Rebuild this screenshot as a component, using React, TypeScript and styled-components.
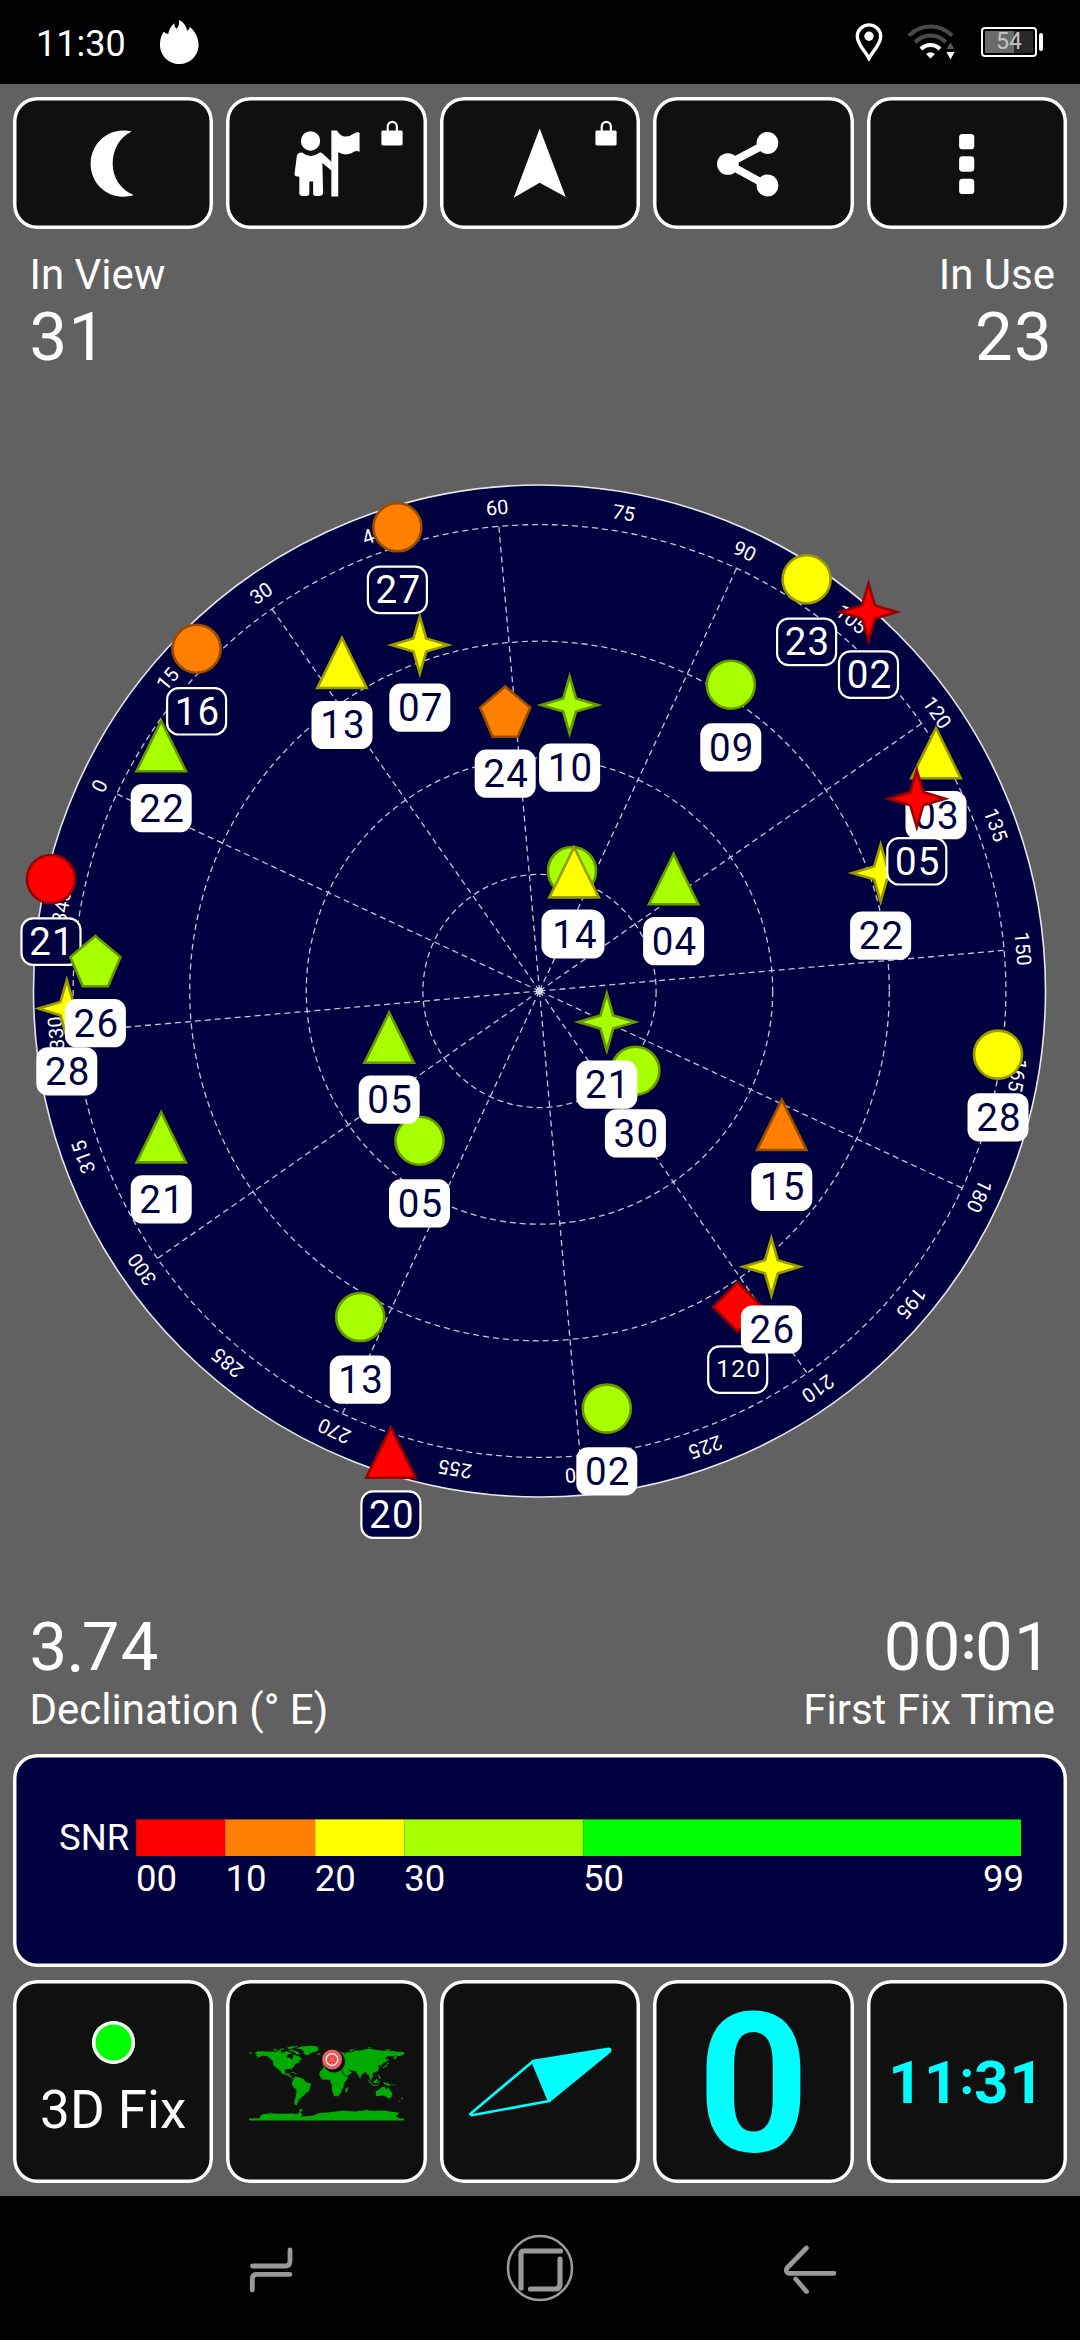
import React from "react";
import styled, { createGlobalStyle } from "styled-components";

const NAVY = "#000040";
const CYAN = "#00ffff";
const GREEN = "#a8ff00";
const YELLOW = "#ffff00";
const ORANGE = "#ff8000";
const RED = "#ff0000";

const OUTLINES: Record<string, string> = {
  [GREEN]: "#659900",
  [YELLOW]: "#999900",
  [ORANGE]: "#994d00",
  [RED]: "#990000",
};

const GlobalStyle = createGlobalStyle`
  body {
    margin: 0;
    background: #000;
    color: #fff;
    font-family: Roboto, "Liberation Sans", sans-serif;
  }
  * { box-sizing: border-box; }
`;

const Screen = styled.div`
  width: 1080px;
  height: 2340px;
  display: flex;
  flex-direction: column;
  overflow: hidden;
`;

const StatusBar = styled.header`
  height: 84px;
  background: #000;
  display: flex;
  align-items: center;
  padding: 0 37px 0 36px;
`;

const Clock = styled.span`
  font-size: 36px;
  line-height: 42px;
  width: 124px;
  padding-top: 4px;
`;

const StatusIcons = styled.div`
  margin-left: auto;
  display: flex;
  align-items: center;
`;

const WifiIcon = styled.svg`
  width: 48px;
  height: 36px;
  margin-left: 24px;
  fill: none;
  stroke-width: 4;
`;

const Battery = styled.div`
  width: 56px;
  height: 30px;
  margin-left: 26px;
  border: 2px solid #fff;
  border-radius: 4px;
  padding: 2px;
`;

const BatteryLevel = styled.div<{ $level: number }>`
  height: 100%;
  display: flex;
  align-items: center;
  justify-content: center;
  font-size: 23px;
  line-height: 22px;
  color: #c4c4c4;
  background: linear-gradient(
    to right,
    #6b6b6b ${(p) => p.$level + 6}%,
    #2b282b ${(p) => p.$level + 6}%
  );
`;

const BatteryTip = styled.div`
  width: 4px;
  height: 18px;
  margin-left: 2px;
  border-radius: 2px;
  background: #fff;
`;

const Body = styled.main`
  flex: 1;
  background: #616161;
  display: flex;
  flex-direction: column;
  padding-top: 13px;
`;

const ButtonRow = styled.div<{ $height: number }>`
  height: ${(p) => p.$height}px;
  margin: 0 13px;
  display: grid;
  grid-template-columns: repeat(5, 1fr);
  gap: 13px;
`;

const Tile = styled.button`
  position: relative;
  display: flex;
  flex-direction: column;
  align-items: center;
  min-width: 0;
  min-height: 0;
  padding: 3.5px;
  font: inherit;
  color: #fff;
  background: #101010;
  border: 0;
  box-shadow: inset 0 0 0 3.5px #fff;
  border-radius: 24px;
`;

const TileArt = styled.svg`
  display: block;
  width: 100%;
  height: 100%;
`;

const LockBadge = styled.svg`
  position: absolute;
  top: 22.5px;
  right: 23.5px;
  width: 22px;
  height: 26px;
`;

const Stats = styled.section<{ $top: number; $bottom: number }>`
  display: flex;
  justify-content: space-between;
  padding: ${(p) => p.$top}px 25px ${(p) => p.$bottom}px 29.5px;
`;

const Stat = styled.div<{ $end?: boolean }>`
  display: flex;
  flex-direction: column;
  align-items: ${(p) => (p.$end ? "flex-end" : "flex-start")};
`;

const StatName = styled.span`
  font-size: 42px;
  line-height: 51px;
  white-space: pre;
`;

const StatValue = styled.span`
  font-size: 67px;
  line-height: 74px;
  letter-spacing: 1.3px;
  padding-right: 2px;
`;

const Dot = styled.span<{ $rise: number; $width: number }>`
  display: inline-flex;
  justify-content: center;
  width: ${(p) => p.$width}px;
  font-family: Lato, Roboto, sans-serif;
  font-weight: 900;
  font-size: 50px;
  line-height: 50px;
  letter-spacing: 0;
  transform: translateY(${(p) => -p.$rise}px);
`;

const Sky = styled.svg`
  display: block;
  width: 1080px;
  height: 1236px;
  font-family: Roboto, "Liberation Sans", sans-serif;
`;

const SnrPanel = styled.section`
  height: 213px;
  margin: 0 13px 13px;
  padding: 65px 0 0 46px;
  display: flex;
  background: ${NAVY};
  box-shadow: inset 0 0 0 3.5px #fff;
  border-radius: 24px;
  font-size: 36.5px;
`;

const SnrTitle = styled.span`
  width: 77px;
  line-height: 37px;
`;

const SnrScale = styled.div`
  width: 885px;
  display: grid;
  grid-template-columns: 10fr 10fr 10fr 20fr 49fr;
`;

const SnrBand = styled.div`
  display: flex;
  flex-direction: column;
  min-width: 0;
`;

const SnrColor = styled.div<{ $color: string }>`
  height: 37px;
  background: ${(p) => p.$color};
  border-top: 1px solid rgba(0, 0, 40, 0.4);
  border-left: 1px solid rgba(0, 0, 40, 0.18);
`;

const SnrTicks = styled.div`
  display: flex;
  justify-content: space-between;
  margin: 3px -3px 0 0;
  line-height: 40px;
`;

const FixLight = styled.div`
  width: 43px;
  height: 43px;
  flex: none;
  margin-top: 37.5px;
  box-shadow: inset 0 0 0 3.5px #fff;
  border-radius: 50%;
  background: #00ff00;
`;

const FixText = styled.span`
  margin-top: 15px;
  font-size: 53px;
  line-height: 62px;
`;

const Heading = styled.span`
  font-size: 195px;
  line-height: 201px;
  font-weight: 700;
  color: ${CYAN};
`;

const LocalTime = styled.span`
  font-size: 60px;
  line-height: 198.5px;
  font-weight: 700;
  letter-spacing: 1.2px;
  color: ${CYAN};
`;

const NavBar = styled.nav`
  height: 144px;
  background: #000;
  display: flex;
  align-items: center;
  justify-content: center;
`;

const NavIcon = styled.svg`
  width: 270px;
  height: 144px;
  fill: none;
  stroke: #999;
  stroke-width: 4.8;
  stroke-linecap: round;
  stroke-linejoin: round;
`;

const Lock = () => (
  <LockBadge viewBox="0 0 22 26">
    <path d="M6.7 11V6.8a4.6 4.9 0 0 1 9.2 0V11" fill="none" stroke="#fff" strokeWidth="2.2" />
    <rect x="0.4" y="10.6" width="21.2" height="14.8" rx="1.4" fill="#fff" />
  </LockBadge>
);

type Shape = "circle" | "triangle" | "star" | "pentagon" | "diamond";

interface Satellite {
  id: string;
  x: number;
  y: number;
  shape: Shape;
  color: string;
  used: boolean;
}

const sat = (
  id: string,
  x: number,
  y: number,
  shape: Shape,
  color: string,
  used = true
): Satellite => ({ id, x, y, shape, color, used });

const satellites: Satellite[] = [
  sat("27", 397.4, 527.3, "circle", ORANGE, false),
  sat("16", 196.6, 648.7, "circle", ORANGE, false),
  sat("21", 51, 879, "circle", RED, false),
  sat("23", 806.6, 579.3, "circle", YELLOW, false),
  sat("", 572, 871, "circle", GREEN),
  sat("09", 730.8, 684.7, "circle", GREEN),
  sat("30", 635.4, 1070.7, "circle", GREEN),
  sat("05", 419.5, 1140.7, "circle", GREEN),
  sat("13", 360.2, 1317, "circle", GREEN),
  sat("28", 998, 1054.6, "circle", YELLOW),
  sat("02", 606.8, 1408.6, "circle", GREEN),
  sat("13", 342, 662.3, "triangle", YELLOW),
  sat("22", 161.2, 745.5, "triangle", GREEN),
  sat("03", 936, 752.5, "triangle", YELLOW),
  sat("14", 574.1, 871.7, "triangle", YELLOW),
  sat("04", 673.6, 878.5, "triangle", GREEN),
  sat("05", 389.2, 1037, "triangle", GREEN),
  sat("21", 161.2, 1136.7, "triangle", GREEN),
  sat("20", 390.9, 1452, "triangle", RED, false),
  sat("15", 781.8, 1124.3, "triangle", ORANGE),
  sat("120", 737.7, 1307, "diamond", RED, false),
  sat("07", 419.8, 645, "star", YELLOW),
  sat("28", 66.8, 1008.6, "star", YELLOW),
  sat("10", 569.6, 705, "star", GREEN),
  sat("02", 868.5, 612, "star", RED, false),
  sat("22", 880.6, 873, "star", YELLOW),
  sat("05", 916.8, 798.7, "star", RED, false),
  sat("21", 606.8, 1022, "star", GREEN),
  sat("26", 771.4, 1266.8, "star", YELLOW),
  sat("24", 505.2, 711, "pentagon", ORANGE),
  sat("26", 95.4, 960.5, "pentagon", GREEN),
];

const POINTS: Record<Exclude<Shape, "circle">, string> = {
  triangle: "0,-24.5 24.7,25.7 -24.7,25.7",
  star: "0,-28.7 6.4,-6.6 28.5,0 6.4,6.6 0,28.7 -6.4,6.6 -28.5,0 -6.4,-6.6",
  pentagon: "0,-24.5 25.1,-3.4 12.6,25.7 -12.6,25.7 -25.1,-3.4",
  diamond: "0,-24.6 24.6,0 0,24.6 -24.6,0",
};

const Marker = ({ s }: { s: Satellite }) => {
  const paint = { fill: s.color, stroke: OUTLINES[s.color], strokeWidth: 2.6 };
  const small = s.id.length > 2;
  return (
    <g transform={`translate(${s.x} ${s.y})`}>
      {s.shape === "circle" ? (
        <circle r="24" {...paint} />
      ) : (
        <polygon points={POINTS[s.shape]} strokeMiterlimit="10" {...paint} />
      )}
      <rect
        x={s.used ? -30.5 : -29.5}
        y={s.used ? 38.6 : 39.4}
        width={s.used ? 61 : 59}
        height={s.used ? 48.2 : 46.4}
        rx="11.5"
        fill={s.used ? "#fff" : NAVY}
        stroke="#fff"
        strokeWidth={s.used ? 0 : 2.2}
      />
      <text
        x="1"
        y={small ? 70.3 : 76}
        textAnchor="middle"
        fontSize={small ? 24.5 : 38.5}
        letterSpacing="1.2"
        fill={s.used ? NAVY : "#fff"}
      >
        {s.id}
      </text>
    </g>
  );
};

const CX = 539.5;
const CY = 991;
const RING = 116.6;
const ROTATION = -65;

const SkyPlot = () => (
  <Sky viewBox="0 374 1080 1236">
    <circle cx={CX} cy={CY} r="506" fill={NAVY} stroke="#e6e6ec" strokeWidth="1.6" />
    <g fill="none" stroke="#c4c4d2" strokeWidth="1.3" strokeDasharray="6 4">
      {[1, 2, 3, 4].map((n) => (
        <circle key={n} cx={CX} cy={CY} r={RING * n} />
      ))}
      {Array.from({ length: 12 }, (_, i) => (
        <line
          key={i}
          x1={CX}
          y1={CY}
          x2={CX}
          y2={CY - RING * 4}
          transform={`rotate(${ROTATION + i * 30} ${CX} ${CY})`}
        />
      ))}
    </g>
    <circle cx={CX} cy={CY} r="3.6" fill="#d8d8e4" />
    {Array.from({ length: 24 }, (_, i) => (
      <text
        key={i}
        x={CX}
        y={CY - 478.4}
        textAnchor="middle"
        fontSize="20"
        fill="#fff"
        transform={`rotate(${ROTATION + i * 15} ${CX} ${CY})`}
      >
        {i * 15}
      </text>
    ))}
    {satellites.map((s, i) => (
      <Marker key={i} s={s} />
    ))}
  </Sky>
);

/* Coastlines as longitude,latitude pairs. */
const LAND = [
  "-168,66 -162,70 -156,71 -141,70 -128,70 -115,69 -108,68 -98,68 -94,72 -88,68 -82,69 -81,66 -87,64 -94,60 -92,57 -85,55 -82,52 -79,52 -79,55 -77,58 -78,62 -73,62 -69,59 -65,60 -62,57 -57,52 -60,50 -66,50 -65,48 -61,46 -66,44 -70,43 -71,41 -75,39 -76,35 -81,31 -80,26 -82,28 -84,30 -90,29 -95,29 -97,26 -97,22 -95,18 -91,19 -88,21 -88,17 -84,15 -83,11 -80,9 -77,8 -80,7 -84,9 -87,13 -94,16 -100,17 -105,20 -106,23 -110,27 -113,31 -114,29 -110,24 -113,27 -117,33 -121,35 -124,40 -124,47 -128,51 -134,57 -140,60 -147,61 -152,59 -158,56 -165,54 -158,59 -165,61 -161,64",
  "-73,78 -66,79 -60,82 -35,83.5 -22,82 -18,76 -22,71 -32,68 -40,65 -43,61 -50,63 -54,67 -53,71 -60,76",
  "-90,73 -80,74 -70,71 -62,66 -65,63 -72,65 -74,69 -82,71",
  "-118,72 -108,73 -103,69 -114,69",
  "-125,74 -120,76 -115,74 -120,72",
  "-92,79 -85,82 -64,83 -76,79 -82,76 -90,77",
  "-110,76 -100,78 -98,75 -108,74",
  "-84,22 -78,23 -74,20 -69,19 -73,18 -77,20",
  "-180,69 -172,67 -170,66 -180,65",
  "-77,8 -72,12 -62,10 -52,5 -50,0 -44,-2 -35,-6 -39,-13 -40,-21 -48,-26 -53,-33 -58,-35 -57,-38 -62,-39 -65,-43 -66,-48 -69,-51 -67,-55 -74,-53 -75,-47 -73,-40 -71,-30 -70,-18 -76,-14 -81,-5 -80,0 -77,4",
  "-6,36 10,37 11,33 20,31 25,32 32,31 36,23 38,18 43,12 51,12 46,3 40,-4 40,-11 35,-20 35,-24 32,-28 27,-34 18,-34 15,-27 12,-18 13,-9 9,-1 9,4 -4,5 -8,4 -13,9 -17,15 -16,22 -10,29",
  "49,-12 50,-16 47,-25 44,-24 44,-17",
  "-9,37 -9,43 -1,44 -4,48 4,52 9,54 8,57 5,60 12,65 20,70 30,70 41,67 40,64 45,68 60,69 68,73 75,72 80,73 88,75 100,77 113,74 130,72 140,73 160,70 180,69 180,65 177,62 170,60 163,60 163,56 157,51 156,57 163,62 155,59 142,59 135,54 141,52 139,47 131,43 127,39 129,36 126,35 125,39 121,39 118,38 122,37 120,34 122,30 119,25 114,22 108,21 106,18 109,14 105,9 103,1 100,8 98,16 94,17 91,22 87,21 80,15 80,10 77,8 73,17 70,21 66,25 57,26 51,29 48,30 56,24 59,22 53,16 45,13 39,21 35,28 36,36 27,37 26,40 22,37 19,42 14,45 18,40 10,44 3,43 -1,37",
  "-24,65 -14,66 -15,63 -22,63",
  "53,71 56,75 68,77 60,73 57,70",
  "95,81 105,79 100,78",
  "138,76 150,75 143,73",
  "141,46 145,43 141,41 141,36 135,33 130,31 131,34 136,36 140,40",
  "143,54 144,50 142,46 141,51",
  "95,5 99,3 106,-4 105,-6 100,-2",
  "105,-6 115,-8 125,-9 115,-10 106,-8",
  "109,1 117,7 119,4 116,-4 110,-3",
  "119,1 125,2 121,-1 122,-5 119,-4",
  "120,18 123,14 126,8 124,6 122,10 120,14",
  "131,-1 141,-3 147,-6 151,-10 146,-9 140,-8 133,-4",
  "150,-4 160,-8 161,-10 151,-6",
  "114,-22 122,-18 126,-14 131,-12 136,-12 136,-16 141,-17 142,-11 146,-18 153,-26 150,-37 144,-39 138,-35 131,-32 124,-33 115,-34",
  "145,-41 148,-41 147,-43",
  "173,-35 178,-38 175,-41",
  "173,-41 167,-46 170,-46",
  "80,9 82,7 80,6",
];

const WorldMap = () => (
  <TileArt viewBox="-30.3 -139.5 580.2 588" preserveAspectRatio="none">
    <g fill="#00ab00">
      <g transform="translate(259.5 153.7) scale(1.2917 -1.2917)">
        {LAND.map((points) => (
          <polygon key={points} points={points} />
        ))}
      </g>
      <polygon points="27,264 60,263 60,256 66,255 65,251 90,248 120,250 160,249 172,251 180,243 176,238 188,235 186,241 180,247 188,251 180,258 190,258 220,255 235,248 262,246 285,243 310,241 345,243 370,240 380,238 390,241 430,240 450,243 474,246 478,249 470,253 468,259 480,264 492,264 492,270 27,270" />
    </g>
    <circle cx="282" cy="93" r="33" fill="#101010" />
    <circle cx="276" cy="87" r="30" fill="#ea6060" />
    <circle cx="275.5" cy="87" r="17.5" fill="#f05a5a" stroke="#fff" strokeWidth="3.6" />
    <circle cx="275.5" cy="87" r="10" fill="none" stroke="#e00000" strokeWidth="3" strokeDasharray="3 6" />
  </TileArt>
);

const App = () => (
  <Screen>
    <GlobalStyle />
    <StatusBar>
      <Clock>11:30</Clock>
      <svg width="38.6" height="44" viewBox="464 60 112 132" preserveAspectRatio="none" fill="#fff">
        <path d="M464 135C464 115 470 102 475 95Q480 101 488 102C490 90 497 76 506 70C505 78 508 84 512 86C519 80 521 68 519 60C532 65 540 78 543 92C548 90 550 85 550 80C562 90 576 108 576 135C576 168 550 192 520 192S464 168 464 135Z" />
      </svg>
      <StatusIcons>
        <svg width="28" height="38" viewBox="0 0 28 38">
          <path d="M14 35.5C11 29 2.3 21.5 2.3 13.4a11.7 11.5 0 0 1 23.4 0C25.7 21.5 17 29 14 35.5Z" fill="none" stroke="#fff" strokeWidth="3.4" />
          <circle cx="14" cy="13.2" r="4.7" fill="#fff" />
        </svg>
        <WifiIcon viewBox="0 0 48 36">
          <path d="M1.8 11.6Q11 2.4 23.5 2.4T45.2 11.6" stroke="#4b4848" />
          <path d="M8.2 18.2Q15 11.6 23.5 11.6T38.8 18.2" stroke="#4b4848" />
          <path d="M14 25Q18 21 23.5 21T33 25" stroke="#fff" />
          <path d="M19 30Q23.5 26.5 28 30L23.5 34.6Z" fill="#fff" />
          <path d="M39.5 25L43.5 18.5L47.5 25Z" fill="#5a5757" />
          <path d="M39.5 28L43.5 35.5L47.5 28Z" fill="#fff" />
        </WifiIcon>
        <Battery>
          <BatteryLevel $level={54}>54</BatteryLevel>
        </Battery>
        <BatteryTip />
      </StatusIcons>
    </StatusBar>

    <Body>
      <ButtonRow $height={132}>
        <Tile aria-label="Night mode">
          <TileArt viewBox="48 301.5 562 374" preserveAspectRatio="none">
            <path fill="#fff" d="M381 393C372 390 362 390 356 390C305 390 262 434 262 490C262 545 305 588 356 588C368 588 378 586 387 583C350 568 326 530 326 490C326 448 346 410 381 393Z" />
          </TileArt>
        </Tile>
        <Tile aria-label="Waypoints">
          <TileArt viewBox="667.5 301.5 562 374" preserveAspectRatio="none" fill="#fff">
            <ellipse cx="901.5" cy="421" rx="28" ry="29" />
            <path d="M862 464Q866 455 878 456Q902 476 927 456Q932 454 937 459L963 484V510L936 487L938 576Q938 586 922 586Q909 586 909 578V542H898V578Q898 586 884 586Q869 586 869 578V528L859 527Q855 526 855 520Z" />
            <path d="M962 390H978L984 398Q992 408 1004 408Q1018 407 1028 399Q1040 392 1044 397V453Q1034 447 1020 458Q1000 466 982 455V587H962Z" />
          </TileArt>
          <Lock />
        </Tile>
        <Tile aria-label="Navigate">
          <TileArt viewBox="443.3 100.5 193.4 125" preserveAspectRatio="none">
            <path fill="#fff" d="M540 128L566 196.5L540 182.3L514 197.3Z" />
          </TileArt>
          <Lock />
        </Tile>
        <Tile aria-label="Share">
          <TileArt viewBox="339 301.5 562 374" preserveAspectRatio="none" fill="#fff">
            <path d="M660 427L545 490L660 555" fill="none" stroke="#fff" strokeWidth="23" />
            <ellipse cx="545" cy="490" rx="31.5" ry="32.5" />
            <ellipse cx="660" cy="427" rx="31.5" ry="33" />
            <ellipse cx="660" cy="554.5" rx="31.5" ry="33" />
          </TileArt>
        </Tile>
        <Tile aria-label="Menu">
          <TileArt viewBox="959 301.5 562 374" preserveAspectRatio="none" fill="#fff">
            <rect x="1218" y="400" width="44" height="46" rx="10" />
            <rect x="1218" y="467" width="44" height="46" rx="10" />
            <rect x="1218" y="534" width="44" height="46" rx="10" />
          </TileArt>
        </Tile>
      </ButtonRow>

      <Stats $top={20} $bottom={0}>
        <Stat>
          <StatName>In View</StatName>
          <StatValue>31</StatValue>
        </Stat>
        <Stat $end>
          <StatName>In Use</StatName>
          <StatValue>23</StatValue>
        </Stat>
      </Stats>

      <SkyPlot />

      <Stats $top={0} $bottom={19}>
        <Stat>
          <StatValue>
            3<Dot $rise={-2.4} $width={13.3}>.</Dot>74
          </StatValue>
          <StatName>Declination (° E)</StatName>
        </Stat>
        <Stat $end>
          <StatValue>
            00<Dot $rise={11} $width={13.3}>:</Dot>01
          </StatValue>
          <StatName>First Fix Time</StatName>
        </Stat>
      </Stats>

      <SnrPanel>
        <SnrTitle>SNR</SnrTitle>
        <SnrScale>
          <SnrBand>
            <SnrColor $color={RED} />
            <SnrTicks>00</SnrTicks>
          </SnrBand>
          <SnrBand>
            <SnrColor $color={ORANGE} />
            <SnrTicks>10</SnrTicks>
          </SnrBand>
          <SnrBand>
            <SnrColor $color={YELLOW} />
            <SnrTicks>20</SnrTicks>
          </SnrBand>
          <SnrBand>
            <SnrColor $color={GREEN} />
            <SnrTicks>30</SnrTicks>
          </SnrBand>
          <SnrBand>
            <SnrColor $color="#00ff00" />
            <SnrTicks>
              <span>50</span>
              <span>99</span>
            </SnrTicks>
          </SnrBand>
        </SnrScale>
      </SnrPanel>

      <ButtonRow $height={203}>
        <Tile>
          <FixLight />
          <FixText>3D Fix</FixText>
        </Tile>
        <Tile aria-label="World map">
          <WorldMap />
        </Tile>
        <Tile aria-label="Compass">
          <TileArt viewBox="443.3 1983.5 193.4 196" preserveAspectRatio="none">
            <g stroke={CYAN} strokeWidth="2.6" strokeLinejoin="round">
              <path d="M470.5 2113.5L533 2061L549.5 2100.5L472 2114.8Z" fill="none" />
              <path d="M533 2060.5L609 2048.2Q611.5 2048.5 610 2051L549.5 2100.5Z" fill={CYAN} />
            </g>
          </TileArt>
        </Tile>
        <Tile>
          <Heading>0</Heading>
        </Tile>
        <Tile>
          <LocalTime>
            11<Dot $rise={9} $width={14.4}>:</Dot>31
          </LocalTime>
        </Tile>
      </ButtonRow>
    </Body>

    <NavBar>
      <NavIcon viewBox="135 2196 270 144">
        <path d="M290 2250V2261Q290 2266 285 2266H252.5" />
        <path d="M290 2274.3H257Q252.3 2274.3 252.3 2279V2290" />
      </NavIcon>
      <NavIcon viewBox="405 2196 270 144">
        <circle cx="540" cy="2268" r="32" strokeWidth="2.6" />
        <path d="M521 2288V2254Q521 2251 524 2251H560.5" strokeWidth="5.2" />
        <path d="M560 2259V2284Q560 2289 555 2289H530.5" strokeWidth="5.2" />
      </NavIcon>
      <NavIcon viewBox="675 2196 270 144">
        <path d="M806.5 2248L787 2268Q785 2271.5 788.5 2273.3H834" />
        <path d="M795.7 2279L806.5 2291.5" />
      </NavIcon>
    </NavBar>
  </Screen>
);

export default App;
